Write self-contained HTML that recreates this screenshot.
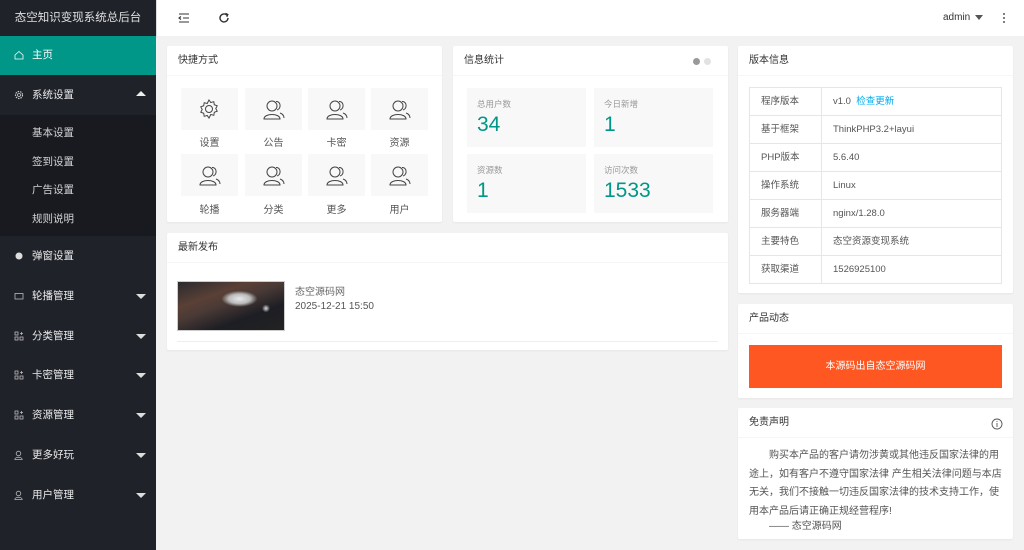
<!DOCTYPE html>
<html><head><meta charset="utf-8"><style>
*{box-sizing:border-box;margin:0;padding:0}
body{width:1024px;height:550px;overflow:hidden;background:#f2f2f2;font-family:"Liberation Sans","Noto Sans CJK SC",sans-serif;font-size:10px;color:#333;position:relative}
.side{position:absolute;left:0;top:0;width:156px;height:550px;background:#20222a;color:#fff}
.logo{height:36px;line-height:36px;text-align:center;color:rgba(255,255,255,.85);font-size:11.5px;background:#20222a;box-shadow:0 1px 2px rgba(0,0,0,.3)}
.nav{position:absolute;left:0;width:156px;height:40px;line-height:40px;padding-left:32px;font-size:10.5px;color:rgba(255,255,255,.9)}
.nav .ic{position:absolute;left:14px;top:15px;width:10px;height:10px}
.nav .ar{position:absolute;right:10px;top:18px;width:0;height:0;border-left:5px solid transparent;border-right:5px solid transparent;border-top:5px solid #ddd}
.nav .up{border-top:none;border-bottom:5px solid #eee;top:16px}
.sub{position:absolute;left:0;top:115px;width:156px;height:121px;background:#191a20}
.sub div{height:28.5px;line-height:28px;padding-left:32px;color:rgba(255,255,255,.8);font-size:10.5px}
.head{position:absolute;left:156px;top:0;right:0;height:36px;background:#fff;border-left:1px solid #ddd}
.card{position:absolute;background:#fff;border-radius:2px;box-shadow:0 1px 2px rgba(0,0,0,.05)}
.ch{height:30px;line-height:30px;padding-left:11px;border-bottom:1px solid #f6f6f6;font-size:10px;color:#333}
.tile{position:absolute;width:57px;height:42px;background:#f8f8f8}
.tl{position:absolute;width:57px;text-align:center;font-size:10px;color:#555}
.st{position:absolute;width:119px;height:59px;background:#f8f8f8}
.st .a{position:absolute;left:10px;top:10px;font-size:8.5px;color:#999}
.st .b{position:absolute;left:10px;top:25px;font-size:21px;color:#009688;font-weight:300}
table{border-collapse:collapse;position:absolute;left:11px;top:41px;width:253px}
td{border:1px solid #e6e6e6;height:28px;font-size:9.5px;line-height:12px;color:#555;padding:0 0 0 11px;vertical-align:middle}
td:first-child{width:72px}
</style></head><body>
<div class="side">
<div class="logo">态空知识变现系统总后台</div>
<div class="nav" style="top:36px;height:39px;line-height:39px;background:#009688;color:#fff"><svg class="ic" style="top:14px" viewBox="0 0 10 10"><path d="M1 5L5 1.5L9 5V9H1Z" fill="none" stroke="#fff" stroke-width=".8"/></svg>主页</div>
<div class="nav" style="top:75px"><svg class="ic" viewBox="0 0 10 10"><circle cx="5" cy="5" r="3.5" fill="none" stroke="#ccc" stroke-width="1.2" stroke-dasharray="1.5 1"/><circle cx="5" cy="5" r="1.5" fill="none" stroke="#ccc" stroke-width=".8"/></svg>系统设置<span class="ar up"></span></div>
<div class="sub"><div style="margin-top:4px">基本设置</div><div>签到设置</div><div>广告设置</div><div>规则说明</div></div>
<div class="nav" style="top:236px"><svg class="ic" viewBox="0 0 10 10"><circle cx="5" cy="5" r="3.5" fill="#ddd"/></svg>弹窗设置</div>
<div class="nav" style="top:276px"><svg class="ic" viewBox="0 0 10 10"><rect x="1" y="2.5" width="8" height="5.5" fill="none" stroke="#bbb" stroke-width=".8"/></svg>轮播管理<span class="ar"></span></div>
<div class="nav" style="top:316px"><svg class="ic" viewBox="0 0 10 10" fill="none" stroke="#bbb" stroke-width=".8"><rect x="1" y="1" width="3" height="3"/><rect x="1" y="6" width="3" height="3"/><rect x="6" y="6" width="3" height="3"/><path d="M7.5 1v3M6 2.5h3"/></svg>分类管理<span class="ar"></span></div>
<div class="nav" style="top:355px"><svg class="ic" viewBox="0 0 10 10" fill="none" stroke="#bbb" stroke-width=".8"><rect x="1" y="1" width="3" height="3"/><rect x="1" y="6" width="3" height="3"/><rect x="6" y="6" width="3" height="3"/><path d="M7.5 1v3M6 2.5h3"/></svg>卡密管理<span class="ar"></span></div>
<div class="nav" style="top:395px"><svg class="ic" viewBox="0 0 10 10" fill="none" stroke="#bbb" stroke-width=".8"><rect x="1" y="1" width="3" height="3"/><rect x="1" y="6" width="3" height="3"/><rect x="6" y="6" width="3" height="3"/><path d="M7.5 1v3M6 2.5h3"/></svg>资源管理<span class="ar"></span></div>
<div class="nav" style="top:435px"><svg class="ic" viewBox="0 0 10 10" fill="none" stroke="#bbb" stroke-width=".8"><circle cx="4.5" cy="3.5" r="2.3"/><path d="M0.8 9.5C1 6.5 8 6.5 8.2 9.5Z"/></svg>更多好玩<span class="ar"></span></div>
<div class="nav" style="top:475px"><svg class="ic" viewBox="0 0 10 10" fill="none" stroke="#bbb" stroke-width=".8"><circle cx="4.5" cy="3.5" r="2.3"/><path d="M0.8 9.5C1 6.5 8 6.5 8.2 9.5Z"/></svg>用户管理<span class="ar"></span></div>
</div>
<div class="head">
<svg style="position:absolute;left:21px;top:13px" width="12" height="10" viewBox="0 0 12 10" fill="none" stroke="#333" stroke-width="1.1"><path d="M1 1h10M5 5h6M1 9h10M3 3.5L1 5l2 1.5"/></svg>
<svg style="position:absolute;left:61px;top:12px" width="12" height="12" viewBox="0 0 12 12" fill="none" stroke="#333" stroke-width="1.4"><path d="M10 6A4 4 0 1 1 8.5 2.8"/><path d="M7.5 1.2L10 2.5 8.8 5" fill="#333" stroke-width="1"/></svg>
<span style="position:absolute;left:786px;top:12px;font-size:10px;color:#333">admin</span>
<span style="position:absolute;left:818px;top:15px;border-left:4px solid transparent;border-right:4px solid transparent;border-top:5px solid #555"></span>
<span style="position:absolute;left:846px;top:12px;width:2px;height:11px;background:radial-gradient(circle,#555 0.9px,transparent 1px) 0 0/2px 4px"></span>
</div>

<div class="card" style="left:167px;top:46px;width:275px;height:176px"><div class="ch">快捷方式</div>
<svg width="0" height="0" style="position:absolute"><defs><g id="u" fill="none" stroke="#444" stroke-width="1"><circle cx="10" cy="8" r="5"/><path d="M2 21C2 15 18 15 18 21Z"/><path d="M14 3.5C19 3 19.5 11 15 12M18 15C21 16 22 18 22 20"/></g></defs></svg>
<div class="tile" style="left:14px;top:42px"><svg style="position:absolute;left:17px;top:10px" width="22" height="22" viewBox="0 0 22 22" fill="none" stroke="#444" stroke-width="1"><circle cx="11" cy="11" r="3.5"/><path d="M11 2l1.8 2.5 3-.8.5 3 2.9 1.1-1.4 2.7 1.4 2.7-2.9 1.1-.5 3-3-.8L11 20l-1.8-2.5-3 .8-.5-3-2.9-1.1 1.4-2.7-1.4-2.7 2.9-1.1.5-3 3 .8Z"/></svg></div>
<div class="tile" style="left:78px;top:42px"><svg style="position:absolute;left:17px;top:10px" width="24" height="22" viewBox="0 0 24 22"><use href="#u"/></svg></div>
<div class="tile" style="left:141px;top:42px"><svg style="position:absolute;left:17px;top:10px" width="24" height="22" viewBox="0 0 24 22"><use href="#u"/></svg></div>
<div class="tile" style="left:204px;top:42px"><svg style="position:absolute;left:17px;top:10px" width="24" height="22" viewBox="0 0 24 22"><use href="#u"/></svg></div>
<div class="tl" style="left:14px;top:88px">设置</div><div class="tl" style="left:78px;top:88px">公告</div><div class="tl" style="left:141px;top:88px">卡密</div><div class="tl" style="left:204px;top:88px">资源</div>
<div class="tile" style="left:14px;top:108px"><svg style="position:absolute;left:17px;top:10px" width="24" height="22" viewBox="0 0 24 22"><use href="#u"/></svg></div>
<div class="tile" style="left:78px;top:108px"><svg style="position:absolute;left:17px;top:10px" width="24" height="22" viewBox="0 0 24 22"><use href="#u"/></svg></div>
<div class="tile" style="left:141px;top:108px"><svg style="position:absolute;left:17px;top:10px" width="24" height="22" viewBox="0 0 24 22"><use href="#u"/></svg></div>
<div class="tile" style="left:204px;top:108px"><svg style="position:absolute;left:17px;top:10px" width="24" height="22" viewBox="0 0 24 22"><use href="#u"/></svg></div>
<div class="tl" style="left:14px;top:155px">轮播</div><div class="tl" style="left:78px;top:155px">分类</div><div class="tl" style="left:141px;top:155px">更多</div><div class="tl" style="left:204px;top:155px">用户</div>
</div>

<div class="card" style="left:453px;top:46px;width:275px;height:176px"><div class="ch">信息统计</div>
<span style="position:absolute;left:240px;top:12px;width:7px;height:7px;border-radius:50%;background:#999"></span>
<span style="position:absolute;left:251px;top:12px;width:7px;height:7px;border-radius:50%;background:#e2e2e2"></span>
<div class="st" style="left:14px;top:42px"><div class="a">总用户数</div><div class="b">34</div></div>
<div class="st" style="left:141px;top:42px"><div class="a">今日新增</div><div class="b">1</div></div>
<div class="st" style="left:14px;top:108px"><div class="a">资源数</div><div class="b">1</div></div>
<div class="st" style="left:141px;top:108px"><div class="a">访问次数</div><div class="b">1533</div></div>
</div>

<div class="card" style="left:167px;top:233px;width:561px;height:117px"><div class="ch">最新发布</div>
<div style="position:absolute;left:10px;top:48px;width:108px;height:50px;border:1px solid #ccc;background:radial-gradient(ellipse 18px 8px at 58% 35%,#e8e8e8,#bbb 60%,transparent 100%),radial-gradient(ellipse 4px 4px at 83% 55%,#ddd,transparent),linear-gradient(160deg,#2a2a2e 0%,#5a4036 30%,#4a3a36 45%,#1d1e24 70%,#222 100%)"></div>
<div style="position:absolute;left:128px;top:50px;font-size:10px;color:#666">态空源码网</div>
<div style="position:absolute;left:128px;top:68px;font-size:10px;color:#555">2025-12-21 15:50</div>
<div style="position:absolute;left:10px;right:10px;top:108px;border-top:1px solid #eee"></div>
</div>

<div class="card" style="left:738px;top:46px;width:275px;height:247px"><div class="ch">版本信息</div>
<table>
<tr><td>程序版本</td><td>v1.0 &nbsp;<span style="color:#01aaed">检查更新</span></td></tr>
<tr><td>基于框架</td><td>ThinkPHP3.2+layui</td></tr>
<tr><td>PHP版本</td><td>5.6.40</td></tr>
<tr><td>操作系统</td><td>Linux</td></tr>
<tr><td>服务器端</td><td>nginx/1.28.0</td></tr>
<tr><td>主要特色</td><td>态空资源变现系统</td></tr>
<tr><td>获取渠道</td><td>1526925100</td></tr>
</table></div>

<div class="card" style="left:738px;top:304px;width:275px;height:94px"><div class="ch">产品动态</div>
<div style="position:absolute;left:11px;top:41px;width:253px;height:43px;background:#ff5722;color:#fff;text-align:center;line-height:43px;font-size:10px">本源码出自态空源码网</div></div>

<div class="card" style="left:738px;top:408px;width:275px;height:131px"><div class="ch">免责声明</div>
<svg style="position:absolute;left:253px;top:10px" width="12" height="12" viewBox="0 0 12 12" fill="none" stroke="#555" stroke-width=".9"><circle cx="6" cy="6" r="5"/><path d="M6 5v4M6 3v1"/></svg>
<div style="position:absolute;left:11px;top:39px;width:256px;font-size:10px;line-height:18.5px;color:#555;text-indent:2em">购买本产品的客户请勿涉黄或其他违反国家法律的用途上，如有客户不遵守国家法律 产生相关法律问题与本店无关，我们不接触一切违反国家法律的技术支持工作，使用本产品后请正确正规经营程序!</div>
<div style="position:absolute;left:31px;top:109px;font-size:10px;color:#555">—— 态空源码网</div>
</div>
</body></html>
